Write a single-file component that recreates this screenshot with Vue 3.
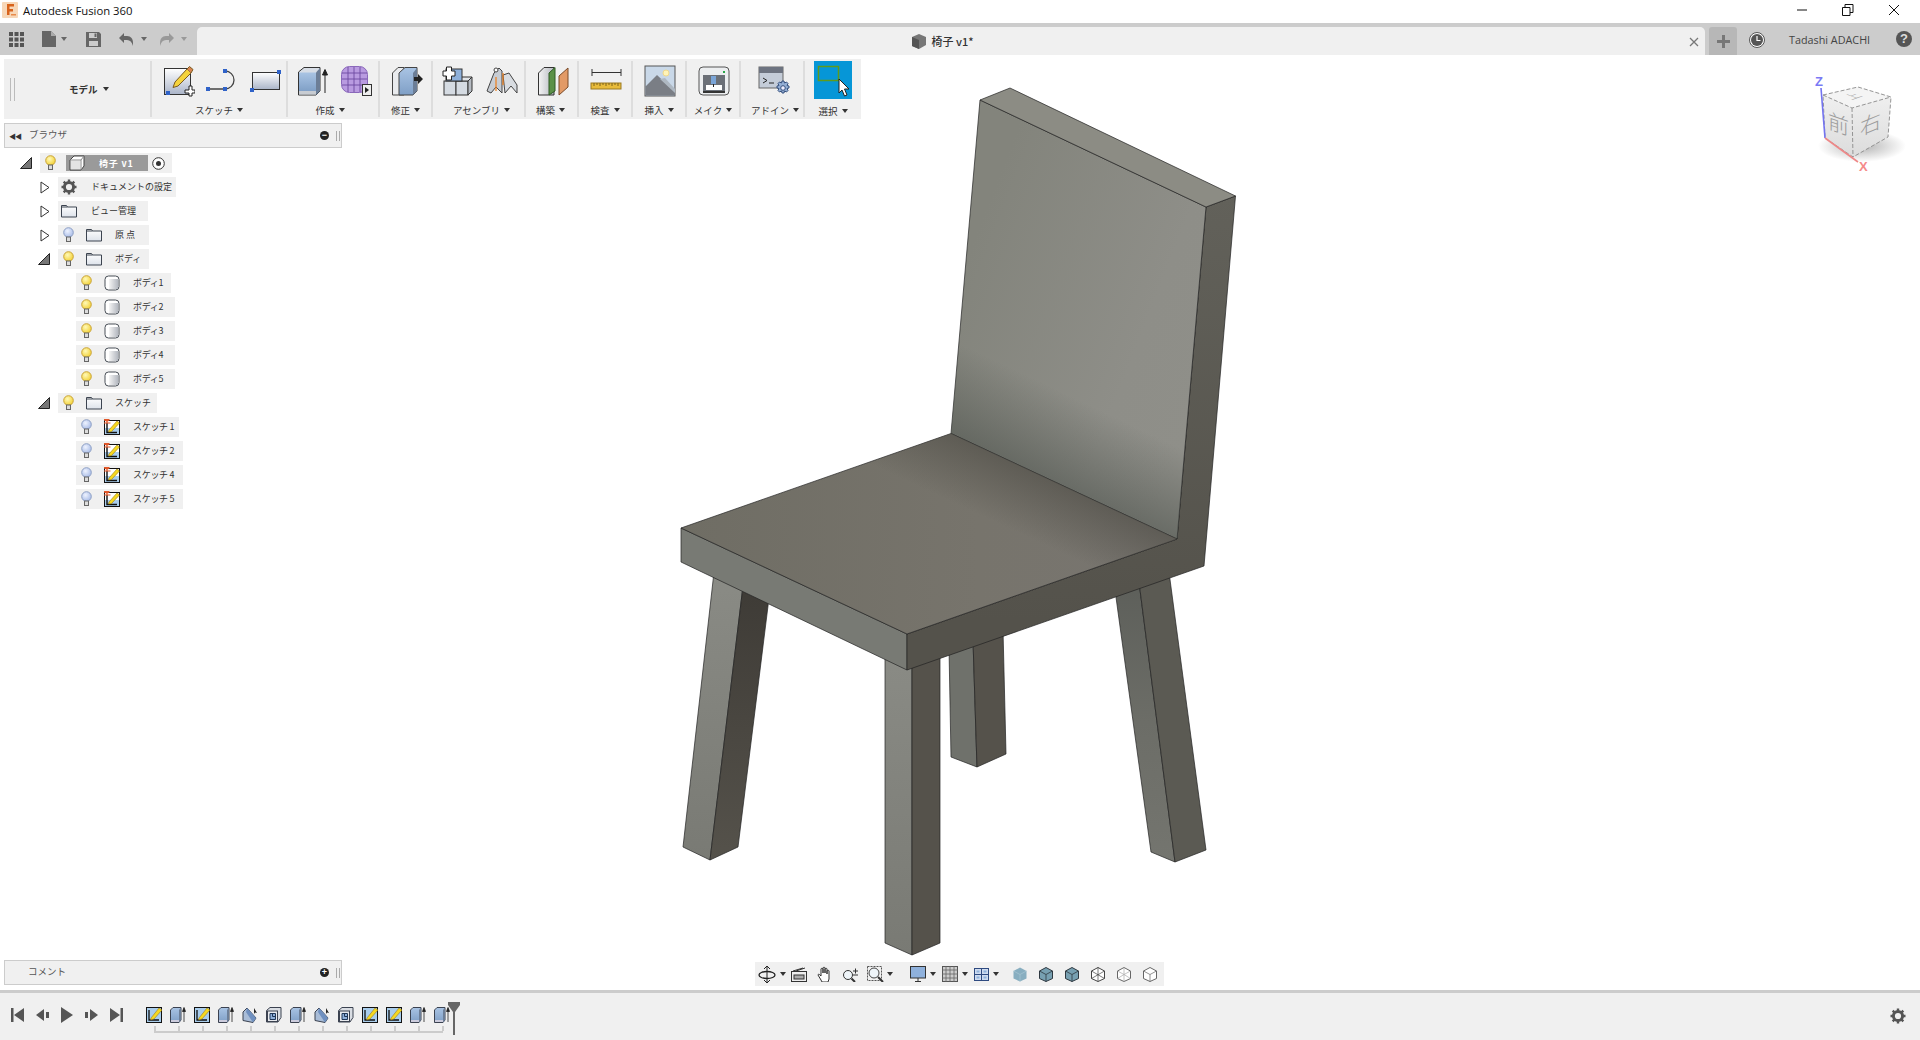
<script setup>
const groups = [
  { label: 'スケッチ', w: 136, gap: 10, pad: 7, icons: [['sk-new', 32, 32], ['sk-arc', 34, 32], ['sk-rect', 33, 32]] },
  { label: '作成', w: 92, gap: 11, pad: 4, lx: -6, icons: [['cr-box', 32, 32], ['cr-mesh', 33, 32]] },
  { label: '修正', w: 53, gap: 0, pad: 2, icons: [['md-press', 32, 32]] },
  { label: 'アセンブリ', w: 93, gap: 12, pad: 2, lx: 6, icons: [['as-new', 32, 32], ['as-joint', 32, 32]] },
  { label: '構築', w: 53, gap: 0, pad: 2, lx: -2, icons: [['cn-plane', 32, 32]] },
  { label: '検査', w: 54, gap: 0, pad: 2, icons: [['in-measure', 32, 32]] },
  { label: '挿入', w: 54, gap: 0, pad: 2, icons: [['ins-pic', 32, 32]] },
  { label: 'メイク', w: 54, gap: 0, pad: 2, icons: [['mk-print', 32, 32]] },
  { label: 'アドイン', w: 64, gap: 0, pad: 4, lx: 6, icons: [['ad-script', 32, 32]] }
]

const tree = [
  { depth: 1, exp: 'closed', icon: 'gear', label: 'ドキュメントの設定', w: 118 },
  { depth: 1, exp: 'closed', icon: 'folder', label: 'ビュー管理', w: 90 },
  { depth: 1, exp: 'closed', bulb: 'off', icon: 'folder', label: '原点', w: 91, wide: true },
  { depth: 1, exp: 'open', bulb: 'on', icon: 'folder', label: 'ボディ', w: 91 },
  { depth: 2, bulb: 'on', icon: 'body', label: 'ボディ1', w: 95 },
  { depth: 2, bulb: 'on', icon: 'body', label: 'ボディ2', w: 99 },
  { depth: 2, bulb: 'on', icon: 'body', label: 'ボディ3', w: 99 },
  { depth: 2, bulb: 'on', icon: 'body', label: 'ボディ4', w: 99 },
  { depth: 2, bulb: 'on', icon: 'body', label: 'ボディ5', w: 99 },
  { depth: 1, exp: 'open', bulb: 'on', icon: 'folder', label: 'スケッチ', w: 99 },
  { depth: 2, bulb: 'off', icon: 'sketch', label: 'スケッチ 1', w: 103 },
  { depth: 2, bulb: 'off', icon: 'sketch', label: 'スケッチ 2', w: 107 },
  { depth: 2, bulb: 'off', icon: 'sketch', label: 'スケッチ 4', w: 107 },
  { depth: 2, bulb: 'off', icon: 'sketch', label: 'スケッチ 5', w: 107 }
]

const timeline = ['tl-sketch', 'tl-extrude', 'tl-sketch', 'tl-extrude', 'tl-chamfer', 'tl-shell', 'tl-extrude', 'tl-chamfer', 'tl-shell', 'tl-sketch', 'tl-sketch', 'tl-extrude', 'tl-extrude']

const ticks = timeline.map((_, i) => i)
</script>

<template>
  <div class="app">
    <!-- shared icons -->
    <svg class="defs" width="0" height="0">
      <defs>
        <linearGradient id="g-paper" x1="0" y1="0" x2="0" y2="1"><stop offset="0" stop-color="#fff" /><stop offset="1" stop-color="#aab4c8" /></linearGradient>
        <linearGradient id="g-folder" x1="0" y1="0" x2="0" y2="1"><stop offset="0" stop-color="#fff" /><stop offset="1" stop-color="#dde2ea" /></linearGradient>
        <linearGradient id="g-blue" x1="0" y1="0" x2="0" y2="1"><stop offset="0" stop-color="#a9c4e4" /><stop offset="1" stop-color="#7f9fc6" /></linearGradient>
        <linearGradient id="g-gray" x1="0" y1="0" x2="1" y2="0"><stop offset="0" stop-color="#f4f4f4" /><stop offset="1" stop-color="#b4b8c0" /></linearGradient>
        <radialGradient id="g-on" cx="0.4" cy="0.35" r="0.7"><stop offset="0" stop-color="#fff9b8" /><stop offset="1" stop-color="#f2cf2e" /></radialGradient>
        <radialGradient id="g-off" cx="0.4" cy="0.35" r="0.7"><stop offset="0" stop-color="#eef3ff" /><stop offset="1" stop-color="#a5b9e6" /></radialGradient>

        <linearGradient id="g-back" gradientUnits="userSpaceOnUse" x1="950" y1="300" x2="1205" y2="400"><stop offset="0" stop-color="#83847c" /><stop offset="0.7" stop-color="#8e8e88" /><stop offset="1" stop-color="#8f8f89" /></linearGradient>
        <linearGradient id="g-back-shade" gradientUnits="userSpaceOnUse" x1="1064" y1="486" x2="1100" y2="410"><stop offset="0" stop-color="#50554f" stop-opacity="0.6" /><stop offset="1" stop-color="#50554f" stop-opacity="0" /></linearGradient>
        <linearGradient id="g-seat" gradientUnits="userSpaceOnUse" x1="681" y1="528" x2="1177" y2="539"><stop offset="0" stop-color="#6f6d64" /><stop offset="0.6" stop-color="#77746c" /><stop offset="1" stop-color="#787570" /></linearGradient>
        <linearGradient id="g-seat-shade" gradientUnits="userSpaceOnUse" x1="1064" y1="486" x2="1038" y2="542"><stop offset="0" stop-color="#4e4c45" stop-opacity="0.6" /><stop offset="1" stop-color="#4e4c45" stop-opacity="0" /></linearGradient>
        <linearGradient id="g-side" gradientUnits="userSpaceOnUse" x1="1200" y1="196" x2="1200" y2="620"><stop offset="0" stop-color="#62615a" /><stop offset="1" stop-color="#54524b" /></linearGradient>
        <linearGradient id="g-leg-l" x1="0" y1="0" x2="0" y2="1"><stop offset="0" stop-color="#8a8b85" /><stop offset="1" stop-color="#797a74" /></linearGradient>
        <linearGradient id="g-leg-r" x1="0" y1="0" x2="0" y2="1"><stop offset="0" stop-color="#3e3b36" /><stop offset="1" stop-color="#55524b" /></linearGradient>
        <linearGradient id="g-leg-far" x1="0" y1="0" x2="0" y2="1"><stop offset="0" stop-color="#5d5f5a" /><stop offset="0.5" stop-color="#6c6d67" /><stop offset="1" stop-color="#74756f" /></linearGradient>
        <radialGradient id="g-shadow" cx="0.5" cy="0.5" r="0.5"><stop offset="0" stop-color="#999" stop-opacity="0.75" /><stop offset="1" stop-color="#999" stop-opacity="0" /></radialGradient>
        <linearGradient id="g-cube" x1="0" y1="0" x2="0" y2="1"><stop offset="0" stop-color="#f2f2f2" /><stop offset="1" stop-color="#dcdcdc" /></linearGradient>

        <symbol id="bulb-on" viewBox="0 0 11 16"><circle cx="5.5" cy="5.5" r="4.8" fill="url(#g-on)" stroke="#c9a33a" /><rect x="3.5" y="10" width="4" height="4.5" fill="#ddd" stroke="#666" /></symbol>
        <symbol id="bulb-off" viewBox="0 0 11 16"><circle cx="5.5" cy="5.5" r="4.8" fill="url(#g-off)" stroke="#8ea0c4" /><rect x="3.5" y="10" width="4" height="4.5" fill="#ddd" stroke="#666" /></symbol>
        <symbol id="folder" viewBox="0 0 16 16"><path d="M.5 2.500h5l1 1.500h9v10H.5z M.5 4h6" fill="url(#g-folder)" stroke="#3c4450" /></symbol>
        <symbol id="body" viewBox="0 0 16 16"><rect x="1" y="1" width="14" height="14" rx="3.5" fill="#fff" stroke="#4a5058" /><rect x="5" y="4" width="9" height="10" fill="url(#g-gray)" /></symbol>
        <symbol id="cube" viewBox="0 0 16 16"><path d="M1 5 5 1h10v10l-3 4H1z" fill="#fff" stroke="#444" /><path d="M1 5h11v10M12 5l3-4" fill="none" stroke="#888" /><rect x="2" y="6" width="9" height="8" fill="#e4e4e4" /></symbol>
        <symbol id="sketch" viewBox="0 0 16 16"><rect x="0.5" y="1.5" width="15" height="14" fill="#a9cdec" stroke="#111" /><rect x="1" y="2" width="14" height="7" fill="#fff" /><path d="M3 4v9.500h10" fill="none" stroke="#111" stroke-width="1.400" /><path d="M5 11 13 2l2.500 2-8 8.500-3 .5z" fill="#f6d820" stroke="#9a7a10" stroke-width=".6" /><path d="M0 0h5.500v1.400L3.600 2.500v1H6.500v1H0v-1h2.400v-1L0 1.400z" fill="#e2582a" /></symbol>
        <symbol id="gear" viewBox="0 0 16 16"><circle cx="8" cy="8" r="4.6" fill="none" stroke="#555" stroke-width="3" /><path d="M8 .5v3M8 12.500v3M.5 8h3M12.500 8h3M2.700 2.700l2.100 2.100M11.200 11.200l2.100 2.100M13.300 2.700l-2.100 2.100M4.800 11.200l-2.100 2.100" stroke="#555" stroke-width="2.400" /></symbol>
        <symbol id="exp-open" viewBox="0 0 12 12"><path d="M.5 11.500 11.500.5v11z" fill="#777" stroke="#222" /></symbol>
        <symbol id="exp-closed" viewBox="0 0 10 13"><path d="M1 1l8 5.500-8 5.500z" fill="#fff" stroke="#333" /></symbol>

        <symbol id="sk-new" viewBox="0 0 32 32"><rect x="1.500" y="3.500" width="26" height="26" fill="url(#g-paper)" stroke="#333" /><rect x="3" y="26" width="4" height="4" fill="#2f62c8" /><path d="M12 17 24 4l4 4-13 13-5 1.500z" fill="#f5d33c" stroke="#7a5a20" /><path d="M24 4l2.500-2.500 3.500 3L28 8" fill="#d88450" stroke="#7a5a20" /><path d="M22 25h4v-4h3v4h3v3h-3v3h-3v-3h-4z" fill="#fff" stroke="#222" /></symbol>
        <symbol id="sk-arc" viewBox="0 0 34 32"><path d="M3 24H20M20 6A9 9 0 0 1 20 24" fill="none" stroke="#444" stroke-width="1.300" /><rect x="1" y="22" width="4" height="4" fill="#2f62c8" /><rect x="18" y="22" width="4" height="4" fill="#2f62c8" /><rect x="18" y="4" width="4" height="4" fill="#2f62c8" /></symbol>
        <symbol id="sk-rect" viewBox="0 0 33 32"><rect x="3.500" y="7.500" width="27" height="17" fill="url(#g-paper)" stroke="#333" /><rect x="28" y="5" width="4" height="4" fill="#2f62c8" /><rect x="1" y="23" width="4" height="4" fill="#2f62c8" /></symbol>
        <symbol id="cr-box" viewBox="0 0 32 32"><path d="M1.500 7 7 2.500h16V26l-4 4H1.500z" fill="#d7dde6" stroke="#333" /><rect x="2" y="7.500" width="17" height="19" fill="url(#g-blue)" /><rect x="2" y="26" width="17" height="3.500" fill="#c8ccd2" /><path d="M19 7.500 23 3v23l-4 4z" fill="#6c7e97" /><path d="M28 28V6M25.500 10 28 4.500l2.500 5.500z" fill="#222" stroke="#222" /></symbol>
        <symbol id="cr-mesh" viewBox="0 0 33 32"><rect x="1.500" y="1.500" width="26" height="26" rx="8" fill="#b99be0" stroke="#8a68ba" /><path d="M2 8h25M2 14h25M2 20h25M8 2v25M14 2v25M20 2v25" stroke="#6e4ba0" fill="none" stroke-width=".9" /><rect x="22.500" y="19.500" width="9" height="11" fill="#eee" stroke="#333" /><path d="M25 22v6l4-3z" fill="#222" /></symbol>
        <symbol id="md-press" viewBox="0 0 32 32"><path d="M1.500 8 7 2.500h6V30H1.500z" fill="#e9ebee" stroke="#444" /><path d="M8 8l6-5.500h12V26l-4 4H8z" fill="url(#g-blue)" stroke="#444" /><path d="M22 8 26 3v23l-4 4z" fill="#6c7e97" /><path d="M23 12h4v-3l5 5-5 5v-3h-4z" fill="#222" /></symbol>
        <symbol id="as-new" viewBox="0 0 32 32"><rect x="2" y="16" width="12" height="14" fill="#d5dbe2" stroke="#333" /><rect x="14" y="16" width="12" height="14" fill="#d5dbe2" stroke="#333" /><path d="M26 16l4-4v14l-4 4z" fill="#b6bbc2" stroke="#333" /><path d="M14 16l4-4h12l-4 4z" fill="#e2e5e9" stroke="#333" /><rect x="4" y="4" width="16" height="12" fill="#8eb0da" stroke="#333" /><path d="M1 6h3.500V2h5v4H13v5H9.500v4h-5v-4H1z" fill="#fff" stroke="#222" /></symbol>
        <symbol id="as-joint" viewBox="0 0 32 32"><path d="M1 26 8 8l5-5 3 3v22l-6-6-5 6z" fill="#c7ccd3" stroke="#444" /><path d="M17 10l6-2 8 12v8l-6-7-6 7z" fill="#d8dce1" stroke="#444" /><path d="M10 12v14M17 8v12" stroke="#ef7e1a" fill="none" stroke-width="1.200" /><circle cx="10" cy="5" r="2" fill="#fff" stroke="#444" /></symbol>
        <symbol id="cn-plane" viewBox="0 0 32 32"><path d="M1.500 8 7 2.500h10V30H1.500z" fill="url(#g-gray)" stroke="#333" /><path d="M12 8l6-5.500V26l-6 4z" fill="#5b9148" stroke="#2e5a24" /><path d="M22 11l9-8v19l-9 8z" fill="#e29a66" stroke="#7a4a28" /></symbol>
        <symbol id="in-measure" viewBox="0 0 32 32"><path d="M2 7.500h29M2 4v7M31 4v7" stroke="#333" fill="none" /><rect x="1" y="18" width="30" height="6" fill="#e8bb3a" stroke="#9b7b22" /><path d="M4 18v3M7 18v2M10 18v3M13 18v2M16 18v3M19 18v2M22 18v3M25 18v2M28 18v3" stroke="#7c6218" fill="none" /></symbol>
        <symbol id="ins-pic" viewBox="0 0 32 32"><rect x="1" y="1" width="30" height="30" fill="#c9d8e8" stroke="#555" /><circle cx="22" cy="8" r="3" fill="#fff4b8" stroke="#f0d88a" /><path d="M1.500 30.500v-9L13 10l18 17v3.500z" fill="#7a7e85" /><path d="M16 14l5-1 10 11v4z" fill="#aeb8c2" /></symbol>
        <symbol id="mk-print" viewBox="0 0 32 32"><rect x="1" y="2" width="30" height="28" rx="4" fill="#eceef0" stroke="#555" /><path d="M5 10h22v16H5z" fill="#6b7078" /><rect x="8" y="20" width="16" height="5" fill="#fff" /><rect x="13" y="11" width="5" height="8" fill="#7aa5d8" /><path d="M15.500 19v3" stroke="#222" /><rect x="25" y="6" width="2" height="2" fill="#2aa84a" /><path d="M5 27h22" stroke="#333" stroke-width="2" /></symbol>
        <symbol id="ad-script" viewBox="0 0 32 32"><rect x="1" y="2" width="24" height="21" fill="#c4ccd8" stroke="#666" /><rect x="1" y="2" width="24" height="6" fill="#6d7380" /><path d="M5 13l4 2.500-4 2.500M11 18h5" stroke="#222" fill="none" /><path d="M24 16l2 0 .5 2 2-1 1.500 1.500-1 2 2 .5v2l-2 .5 1 2-1.500 1.500-2-1-.5 2h-2l-.5-2-2 1-1.500-1.500 1-2-2-.5v-2l2-.5-1-2 1.500-1.500 2 1z" fill="#93aed4" stroke="#37517e" /><circle cx="25" cy="23" r="2.300" fill="#eef" stroke="#37517e" /></symbol>

        <symbol id="tl-sketch" viewBox="0 0 16 16"><rect x="0.500" y="0.500" width="15" height="15" fill="#a9cdec" stroke="#111" /><path d="M3 3v10h10" fill="none" stroke="#111" stroke-width="1.300" /><path d="M5 11 13 1l3 2-8 9-3.500 1z" fill="#f6d820" stroke="#8a6c14" stroke-width=".5" /></symbol>
        <symbol id="tl-extrude" viewBox="0 0 16 16"><path d="M.5 3 3 .5h8V13l-2 2.500H.5z" fill="url(#g-blue)" stroke="#3b4250" /><path d="M9 3l2-2.500V13l-2 2.500z" fill="#6c7e97" /><rect x="1" y="13" width="8" height="2" fill="#ccd" /><path d="M14 15V2M12.500 4.500 14 .5l1.500 4z" fill="#222" stroke="#222" stroke-width=".8" /></symbol>
        <symbol id="tl-chamfer" viewBox="0 0 16 16"><path d="M1 5 5 1l9 10-3 4.500-10-2z" fill="#a9bdd8" stroke="#3b4250" /><path d="M5 1l2 2 7 8-3 4.500L4 5z" fill="#6f90c0" /><path d="M12 1l3 5-2-.5-1 1.500z" fill="#222" /></symbol>
        <symbol id="tl-shell" viewBox="0 0 16 16"><path d="M.5 3.500 4 .5h11v10l-3 4.500H.5z" fill="#d9dde3" stroke="#3b4250" /><rect x="1.500" y="4" width="10" height="10.500" fill="#e8eaee" stroke="#3b4250" /><path d="M4 6.500h5.500v6H4z" fill="#8eb0da" stroke="#1f3657" /><path d="M6.500 6.500v3H9.500" fill="none" stroke="#1f3657" /></symbol>

        <symbol id="nc-solid" viewBox="0 0 14 15"><path d="M7 .5 13.500 4v7.500L7 14.500.5 11.500V4z" fill="#88aec0" /><path d="M7 7.500v7M.5 4 7 7.500 13.500 4" fill="none" stroke="#a7c6d3" stroke-width=".7" /></symbol>
        <symbol id="nc-edge" viewBox="0 0 14 15"><path d="M7 .5 13.500 4v7.500L7 14.500.5 11.500V4z" fill="#77a0b2" stroke="#2e3840" /><path d="M7 7.500v7M.5 4 7 7.500 13.500 4" fill="none" stroke="#2e3840" stroke-width=".8" /></symbol>
        <symbol id="nc-wire" viewBox="0 0 14 15"><path d="M7 .5 13.500 4v7.500L7 14.500.5 11.500V4z" fill="#fff" stroke="#444" /><path d="M7 .5v14M.5 4l13 7.500M13.500 4 .5 11.500" fill="none" stroke="#444" stroke-width=".7" /></symbol>
        <symbol id="nc-wire2" viewBox="0 0 14 15"><path d="M7 .5 13.500 4v7.500L7 14.500.5 11.500V4z" fill="#fff" stroke="#666" /><path d="M7 7.500v7M.5 4 7 7.500 13.500 4M7 7.500V.5M.5 11.500 7 7.500 13.500 11.500" fill="none" stroke="#aaa" stroke-width=".7" /></symbol>
        <symbol id="nc-plain" viewBox="0 0 14 15"><path d="M7 .5 13.500 4v7.500L7 14.500.5 11.500V4z" fill="#fff" stroke="#666" /><path d="M7 7.500v7M.5 4 7 7.500 13.500 4" fill="none" stroke="#666" stroke-width=".7" /></symbol>
      </defs>
    </svg>

    <header class="titlebar">
      <svg class="logo" width="16" height="16" viewBox="0 0 16 16"><rect width="16" height="16" rx="1" fill="#f7d7b8" /><path d="M5 2h7v2.500H7.500V7H11v2.500H7.500V13H5z" fill="#d8631c" /><rect x="9" y="12" width="5" height="1.500" fill="#e88a4a" /></svg>
      <span class="app-name">Autodesk Fusion 360</span>
      <div class="win-ctrls">
        <svg width="12" height="12" viewBox="0 0 12 12"><path d="M1 6h10" stroke="#111" /></svg>
        <svg width="12" height="12" viewBox="0 0 12 12"><path d="M.5 3.500h7.500v8H.5z M3 3.500V.5h8v8H8" fill="none" stroke="#111" /></svg>
        <svg width="12" height="12" viewBox="0 0 12 12"><path d="M1 1l10 10M11 1 1 11" stroke="#111" /></svg>
      </div>
    </header>

    <div class="tabbar">
      <div class="qat">
        <svg width="15" height="15" viewBox="0 0 15 15" fill="#555"><path d="M0 0h4v4H0zM5.500 0h4v4h-4zM11 0h4v4h-4zM0 5.500h4v4H0zM5.500 5.500h4v4h-4zM11 5.500h4v4h-4zM0 11h4v4H0zM5.500 11h4v4h-4zM11 11h4v4h-4z" /></svg>
        <svg class="q-file" width="14" height="16" viewBox="0 0 14 16"><path d="M0 0h9l5 5v11H0z" fill="#666" /><path d="M9 0v5h5z" fill="#aaa" /></svg>
        <i class="caret q-caret"></i>
        <svg class="q-save" width="15" height="15" viewBox="0 0 15 15"><path d="M0 0h13l2 2v13H0z" fill="#666" /><path d="M3 1h8v5H3zM3 9h9v5H3z" fill="#ccc" /><path d="M8.500 1.500h2v3.500h-2z" fill="#666" /></svg>
        <svg class="q-undo" width="14" height="13" viewBox="0 0 14 13"><path d="M5 0v3h3c4 0 6 3 6 7v3c-1-4-3-6-6-6H5v3L0 5z" fill="#666" /></svg>
        <i class="caret q-caret c-undo"></i>
        <svg class="q-redo" width="14" height="13" viewBox="0 0 14 13"><path d="M9 0v3H6C2 3 0 6 0 10v3c1-4 3-6 6-6h3v3l5-5z" fill="#999" /></svg>
        <i class="caret q-caret dim"></i>
      </div>
      <div class="doc-tab">
        <div class="doc-title">
          <svg width="15" height="15" viewBox="0 0 15 15"><path d="M1 3 8 0l7 3v8l-7 4-7-3z" fill="#777" /><path d="M8 6v9L1 12V3z" fill="#555" /></svg>
          <span>椅子 v1*</span>
        </div>
        <svg class="tab-x" width="10" height="10" viewBox="0 0 10 10"><path d="M1 1l8 8M9 1 1 9" stroke="#777" stroke-width="1.300" /></svg>
      </div>
      <div class="plus-btn"><svg width="13" height="13" viewBox="0 0 13 13"><path d="M5 0h3v5h5v3H8v5H5V8H0V5h5z" fill="#777" /></svg></div>
      <svg class="clock" width="16" height="16" viewBox="0 0 16 16"><circle cx="8" cy="8" r="7.500" fill="#fff" stroke="#555" /><circle cx="8" cy="8" r="6" fill="#555" /><path d="M8 4v4.500h3.500" fill="none" stroke="#fff" stroke-width="1.200" /></svg>
      <span class="user">Tadashi ADACHI</span>
      <div class="help">?</div>
    </div>

    <main class="viewport">
      <svg class="scene" viewBox="0 55 1920 935" width="1920" height="935">
        <!-- back leg -->
        <path d="M949 648 973 640 977 767 951 757z" fill="#6f716b" stroke="#222" stroke-width=".7" />
        <path d="M973 640 1003 630 1006 754 977 767z" fill="#55524b" stroke="#222" stroke-width=".7" />
        <!-- front left leg -->
        <path d="M714 572 743 586 710 860 683 847z" fill="url(#g-leg-l)" stroke="#222" stroke-width=".7" />
        <path d="M743 586 769 598 738 847 710 860z" fill="url(#g-leg-r)" stroke="#222" stroke-width=".7" />
        <!-- right leg -->
        <path d="M1115 590 1139 582 1175 862 1151 852z" fill="url(#g-leg-far)" stroke="#222" stroke-width=".7" />
        <path d="M1139 582 1169 572 1206 850 1175 862z" fill="#5b5a53" stroke="#222" stroke-width=".7" />
        <!-- centre leg -->
        <path d="M885 650 912 663 912 955 885 943z" fill="url(#g-leg-l)" stroke="#222" stroke-width=".7" />
        <path d="M912 663 940 652 940 943 912 955z" fill="#55524b" stroke="#222" stroke-width=".7" />
        <!-- seat side faces, the right one runs up into the backrest side -->
        <path d="M681 528 907 634 907 670 681 562z" fill="#787a74" stroke="#222" stroke-width=".7" />
        <path d="M907 634 1177 539 1206 207 1235.500 196 1204 566 907 670z" fill="url(#g-side)" stroke="#222" stroke-width=".7" />
        <!-- backrest -->
        <path d="M980 100 1206 207 1177 539 951 433.500z" fill="url(#g-back)" stroke="#222" stroke-width=".7" />
        <path d="M980 100 1206 207 1177 539 951 433.500z" fill="url(#g-back-shade)" />
        <path d="M980 100 1010 88 1235.500 196 1206 207z" fill="#8c8c84" stroke="#222" stroke-width=".7" />
        <!-- seat top -->
        <path d="M681 528 951 433.500 1177 539 907 634z" fill="url(#g-seat)" stroke="#222" stroke-width=".7" />
        <path d="M681 528 951 433.500 1177 539 907 634z" fill="url(#g-seat-shade)" />
      </svg>

      <section class="toolbar">
        <div class="tool-model">
          <span class="grip"></span>
          <span class="model-label">モデル</span>
          <i class="caret dark"></i>
        </div>
        <div v-for="g in groups" :key="g.label" class="tool-group" :style="{ width: g.w + 'px' }">
          <div class="tool-icons" :style="{ gap: g.gap + 'px', paddingLeft: g.pad + 'px' }">
            <svg v-for="ic in g.icons" :key="ic[0]" :width="ic[1]" :height="ic[2]"><use :href="'#' + ic[0]" /></svg>
          </div>
          <div class="tool-label" :style="{ paddingLeft: g.lx > 0 ? g.lx + 'px' : 0, paddingRight: g.lx < 0 ? -g.lx + 'px' : 0 }">{{ g.label }}<i class="caret dark"></i></div>
        </div>
        <div class="tool-group last">
          <div class="select-btn">
            <svg width="38" height="38" viewBox="0 0 38 38"><rect x="4.500" y="5.500" width="20" height="14" fill="none" stroke="#5f9a1c" stroke-width="1.500" /><path d="M25 18v14l3-3 2.500 6 2.500-1-2.500-6H35z" fill="#fff" stroke="#222" /></svg>
          </div>
          <div class="tool-label">選択<i class="caret dark"></i></div>
        </div>
      </section>

      <section class="panel browser">
        <span class="rewind">◀◀</span>
        <span class="panel-title">ブラウザ</span>
        <span class="round-btn">−</span>
        <span class="panel-grip"></span>
      </section>

      <section class="tree">
        <div class="row root">
          <svg class="exp-open" width="12" height="12"><use href="#exp-open" /></svg>
          <div class="chip" style="width: 132px">
            <svg class="bulb" width="11" height="16"><use href="#bulb-on" /></svg>
            <div class="root-name">
              <svg width="16" height="16"><use href="#cube" /></svg>
              <span>椅子 v1</span>
            </div>
            <svg class="target" width="13" height="13" viewBox="0 0 13 13"><circle cx="6.500" cy="6.500" r="5.800" fill="#fff" stroke="#333" /><circle cx="6.500" cy="6.500" r="2.500" fill="#333" /></svg>
          </div>
        </div>
        <div v-for="n in tree" :key="n.label" class="row" :style="{ paddingLeft: 20 + n.depth * 18 + 'px' }">
          <div class="exp-slot">
            <svg v-if="n.exp === 'open'" width="12" height="12"><use href="#exp-open" /></svg>
            <svg v-else-if="n.exp === 'closed'" class="exp-c" width="10" height="13"><use href="#exp-closed" /></svg>
          </div>
          <div class="chip" :style="{ width: n.w + 'px' }">
            <svg v-if="n.bulb" class="bulb" width="11" height="16"><use :href="'#bulb-' + n.bulb" /></svg>
            <svg class="node-icon" :class="{ solo: !n.bulb }" width="16" height="16"><use :href="'#' + n.icon" /></svg>
            <span class="node-label" :class="{ solo: !n.bulb, sub: n.depth === 2, wide: n.wide }">{{ n.label }}</span>
          </div>
        </div>
      </section>

      <div class="spacer"></div>

      <section class="panel comment">
        <span class="panel-title">コメント</span>
        <span class="round-btn">+</span>
        <span class="panel-grip"></span>
      </section>

      <nav class="navbar">
        <svg width="18" height="17" viewBox="0 0 18 17"><path d="M9 0v17M6 3l3-3 3 3M6 14l3 3 3-3" fill="none" stroke="#222" /><ellipse cx="9" cy="9" rx="8" ry="3.500" fill="none" stroke="#222" stroke-width="1.300" /></svg>
        <i class="caret dark nav-caret"></i>
        <svg class="n1" width="16" height="15" viewBox="0 0 16 15"><rect x=".5" y="4.500" width="15" height="10" fill="#eee" stroke="#333" /><rect x="3" y="8" width="10" height="4" fill="#aaa" stroke="#333" /><path d="M2 4 12 1M5 4l9-3" stroke="#333" /></svg>
        <svg class="n2" width="16" height="16" viewBox="0 0 16 16"><path d="M4 14 1 9c0-1 1-1 2 0l1 1V3c0-1 2-1 2 0v4-5c0-1 2-1 2 0v5-4c0-1 2-1 2 0v5-3c0-1 2-1 2 0v8l-1 3H5z" fill="#fff" stroke="#333" /></svg>
        <svg class="n3" width="17" height="15" viewBox="0 0 17 15"><circle cx="6" cy="8" r="4.500" fill="#eef4f8" stroke="#333" /><path d="M9.500 11.500 13 15" stroke="#333" stroke-width="2" /><path d="M11 4h5M13.500 1.500v5M11 8h5" stroke="#333" /></svg>
        <svg class="n4" width="17" height="16" viewBox="0 0 17 16"><rect x=".5" y=".5" width="14" height="14" fill="none" stroke="#555" stroke-dasharray="2 1" /><circle cx="7" cy="7" r="5" fill="#eef4f8" stroke="#444" /><path d="M11 11l5 5" stroke="#333" stroke-width="2" /></svg>
        <i class="caret dark nav-caret c2"></i>
        <svg class="n5" width="16" height="16" viewBox="0 0 16 16"><rect x=".5" y=".5" width="15" height="11.500" fill="#8fb1dc" stroke="#333" /><path d="M5 15.500h6M8 12v3" stroke="#333" /></svg>
        <i class="caret dark nav-caret"></i>
        <svg class="n6" width="16" height="16" viewBox="0 0 16 16"><rect x=".5" y=".5" width="15" height="15" fill="#ccc" stroke="#555" /><path d="M4 0v16M8 0v16M12 0v16M0 4h16M0 8h16M0 12h16" stroke="#666" stroke-width=".8" /></svg>
        <i class="caret dark nav-caret"></i>
        <svg class="n7" width="15" height="13" viewBox="0 0 15 13"><rect x=".5" y=".5" width="14" height="12" fill="#cfdcf0" stroke="#2e4a80" /><path d="M7.500 0v13M0 6.500h15" stroke="#2e4a80" /><path d="M2.500 2.500h3v2h-3zM9.500 2.500h3v2h-3zM2.500 8.500h3v2h-3zM9.500 8.500h3v2h-3z" fill="#8fb1dc" /></svg>
        <i class="caret dark nav-caret"></i>
        <svg class="n8" width="14" height="15"><use href="#nc-solid" /></svg>
        <svg class="n9" width="14" height="15"><use href="#nc-edge" /></svg>
        <svg class="n9" width="14" height="15"><use href="#nc-edge" /></svg>
        <svg class="n9" width="14" height="15"><use href="#nc-wire" /></svg>
        <svg class="n9" width="14" height="15"><use href="#nc-wire2" /></svg>
        <svg class="n9" width="14" height="15"><use href="#nc-plain" /></svg>
      </nav>

      <svg class="viewcube" width="110" height="110" viewBox="1810 72 110 110">
        <ellipse cx="1862" cy="146" rx="44" ry="16" fill="url(#g-shadow)" />
        <path d="M1823 95 1858 87 1891 97 1888 137 1853 157 1825 138z" fill="url(#g-cube)" />
        <path d="M1823 95 1858 87 1891 97 1852 108z" fill="#f4f4f4" />
        <path d="M1823 95 1858 87 1891 97 1888 137 1853 157 1825 138zM1823 95 1852 108 1891 97M1852 108 1853 157" fill="none" stroke="#8a8a8a" stroke-dasharray="4 2" stroke-width=".9" />
        <path d="M1821 88 1825 138" stroke="#7373f0" stroke-width="1.600" />
        <path d="M1825 138 1858 162" stroke="#e88" stroke-width="1.600" />
        <text x="1815" y="86" class="axis-z">Z</text>
        <text x="1859" y="171" class="axis-x">X</text>
        <text transform="matrix(1 .35 0 1 1828 128)" class="cube-text">前</text>
        <text transform="matrix(1 -.42 0 1 1860 136)" class="cube-text">右</text>
        <text transform="matrix(.8 -.28 .8 .3 1851 100)" class="cube-text small">上</text>
      </svg>
    </main>

    <footer class="timeline">
      <div class="media">
        <svg width="13" height="14" viewBox="0 0 13 14"><path d="M0 0h2.500v14H0zM13 0v14L3 7z" fill="#555" /></svg>
        <svg width="13" height="12" viewBox="0 0 13 12"><path d="M8 0v12L0 6zM10 3h3v6h-3z" fill="#555" /></svg>
        <svg width="12" height="16" viewBox="0 0 12 16"><path d="M0 0l12 8-12 8z" fill="#555" /></svg>
        <svg width="13" height="12" viewBox="0 0 13 12"><path d="M5 0v12l8-6zM0 3h3v6H0z" fill="#555" /></svg>
        <svg width="13" height="14" viewBox="0 0 13 14"><path d="M0 0l10 7-10 7zM10.500 0H13v14h-2.500z" fill="#555" /></svg>
      </div>
      <div class="steps">
        <div class="step-icons">
          <svg v-for="(t, i) in timeline" :key="i" width="16" height="16"><use :href="'#' + t" /></svg>
        </div>
        <div class="ruler">
          <i v-for="i in ticks" :key="i"></i>
        </div>
        <svg class="marker" width="12" height="33" viewBox="0 0 12 33"><path d="M0 0h12v3L7 10v23H5V10L0 3z" fill="#666" /></svg>
      </div>
      <svg class="tl-gear" width="16" height="16"><use href="#gear" /></svg>
    </footer>
  </div>
</template>

<style>
html, body { margin: 0; height: 100%; background: #fff; overflow: hidden; }
</style>

<style scoped>
.app {
  width: 1920px;
  height: 1040px;
  display: flex;
  flex-direction: column;
  background: #fff;
  font-family: "Noto Sans CJK JP", "Noto Sans", sans-serif;
  color: #333;
  overflow: hidden;
}
.defs { position: absolute; }
svg { display: block; flex: none; }
.caret {
  display: inline-block;
  width: 0;
  height: 0;
  border-left: 3px solid transparent;
  border-right: 3px solid transparent;
  border-top: 4px solid #666;
}
.caret.dark { border-top-color: #333; }

.titlebar { height: 23px; display: flex; align-items: center; padding: 0 20px 3px 2px; box-sizing: border-box; flex: none; }
.logo { margin-right: 5px; }
.app-name { font: 11.300px "Open Sans", sans-serif; color: #111; }
.win-ctrls { margin-left: auto; display: flex; gap: 34px; }

.tabbar { height: 32px; flex: none; background: #ccc; display: flex; align-items: flex-end; }
.qat { width: 197px; height: 32px; display: flex; align-items: center; padding-left: 9px; box-sizing: border-box; }
.q-file { margin-left: 18px; }
.q-caret { margin-left: 5px; border-left-width: 3.5px; border-right-width: 3.5px; }
.q-caret.dim { border-top-color: #999; margin-left: 7px; }
.q-save { margin-left: 19px; }
.q-undo { margin-left: 18px; }
.c-undo { margin-left: 8px; }
.q-redo { margin-left: 13px; }
.doc-tab { width: 1508px; height: 28px; background: #f0f0f0; border-radius: 5px 5px 0 0; display: flex; align-items: center; justify-content: center; position: relative; }
.doc-title { display: flex; align-items: center; gap: 5px; font-size: 11px; font-weight: 500; color: #333; margin-left: -17px; }
.tab-x { position: absolute; right: 6px; top: 10px; }
.plus-btn { width: 28px; height: 28px; margin-left: 4px; background: #b7b7b7; border-radius: 3px 3px 0 0; display: flex; align-items: center; justify-content: center; }
.clock { margin: 0 0 7px 12px; }
.user { font: 10.800px "Open Sans", sans-serif; color: #444; width: 100px; margin: 0 0 8px 24px; }
.help { width: 16px; height: 16px; margin: 0 0 8px 7px; border-radius: 50%; background: #555; color: #ddd; font: bold 13px/16px "Liberation Sans", sans-serif; text-align: center; }

.viewport { position: relative; flex: 1; display: flex; flex-direction: column; min-height: 0; }
.scene { position: absolute; left: 0; top: 0; }

.toolbar { position: relative; margin: 4px 0 0 4px; height: 60px; display: flex; align-self: flex-start; background: #f0f0f0; flex: none; }
.tool-model { width: 148px; box-sizing: border-box; display: flex; align-items: center; border-right: 2px solid #ddd; margin: 2px 0; gap: 5px; }
.grip { width: 3px; height: 23px; margin: 0 49px 0 6px; border-left: 1px solid #bbb; border-right: 1px solid #bbb; }
.model-label { font-size: 9.500px; font-weight: 700; color: #333; }
.tool-group { box-sizing: border-box; display: flex; flex-direction: column; align-items: center; border-right: 2px solid #ddd; margin: 2px 0; }
.tool-group.last { border-right: 0; width: 56px; margin: 2px 0 0; }
.tool-icons { display: flex; height: 37px; padding-top: 4px; box-sizing: border-box; }
.tool-label { display: flex; align-items: center; gap: 4px; font-size: 9.500px; line-height: 14px; height: 15px; margin-top: 5px; color: #333; white-space: nowrap; }
.select-btn { width: 38px; height: 38px; background: #0696d7; margin-right: 1px; }
.tool-group.last .tool-label { margin-top: 4px; }

.panel { position: relative; margin-left: 4px; width: 338px; height: 25px; box-sizing: border-box; flex: none; background: #f0f0f0; border: 1px solid #ccc; display: flex; align-items: center; font-size: 9.500px; color: #555; }
.browser { margin-top: 4px; }
.comment { margin-bottom: 5px; }
.panel-title { position: relative; top: -2px; }
.rewind { font-size: 7px; letter-spacing: -1px; margin-left: 4px; width: 20px; color: #333; }
.comment .panel-title { margin-left: 23px; }
.round-btn { margin-left: auto; width: 9px; height: 9px; border-radius: 50%; background: #222; color: #fff; font: bold 9px/9px "Liberation Sans", sans-serif; text-align: center; }
.panel-grip { width: 2px; height: 10px; margin: 0 1px 0 7px; border-left: 1px solid #aaa; border-right: 1px solid #aaa; }

.tree { position: relative; padding-top: 5px; display: flex; flex-direction: column; gap: 4px; flex: none; }
.row { display: flex; align-items: center; height: 20px; }
.row.root { padding-left: 20px; }
.exp-open { margin-right: 8px; }
.exp-slot { width: 20px; display: flex; justify-content: flex-start; }
.exp-c { margin-left: 2px; }
.chip { height: 20px; background: #f0f0f0; display: flex; align-items: center; box-sizing: border-box; font-size: 9px; color: #333; white-space: nowrap; }
.bulb { margin-left: 5px; }
.node-icon { margin-left: 12px; }
.node-icon.solo { margin-left: 3px; }
.node-label { margin-left: 13px; position: relative; top: -1px; }
.node-label.solo { margin-left: 14px; }
.node-label.sub { letter-spacing: -.3px; }
.node-label.wide { letter-spacing: 2px; }
.root-name { margin-left: 10px; width: 82px; height: 16px; background: #9a9a9a; display: flex; align-items: center; padding-left: 3px; box-sizing: border-box; color: #fff; font-weight: 700; }
.root-name span { margin-left: 14px; letter-spacing: .8px; }
.target { margin-left: 4px; }

.spacer { flex: 1; }

.navbar { position: absolute; left: 755px; top: 907px; width: 409px; height: 24px; background: #f0f0f0; display: flex; align-items: center; padding-left: 3px; box-sizing: border-box; }
.nav-caret { margin-left: 4px; }
.c2 { margin-left: 3px; }
.n1 { margin-left: 5px; }
.n2 { margin-left: 10px; }
.n3 { margin-left: 9px; }
.n4 { margin-left: 8px; }
.n5 { margin-left: 17px; }
.n6 { margin-left: 5.500px; }
.n7 { margin-left: 6.500px; }
.n8 { margin-left: 13.500px; }
.n9 { margin-left: 12px; }

.viewcube { position: absolute; left: 1810px; top: 17px; }
.axis-z { font: bold 13px "Liberation Sans", sans-serif; fill: #7a7af5; }
.axis-x { font: bold 13px "Liberation Sans", sans-serif; fill: #f58a8a; }
.cube-text { font-size: 21px; fill: #9c9c9c; font-family: "Noto Sans CJK JP", sans-serif; font-weight: 300; }
.cube-text.small { font-size: 15px; }

.timeline { position: relative; height: 50px; flex: none; box-sizing: border-box; background: #f0f0f0; border-top: 3px solid #ccc; display: flex; align-items: flex-start; }
.media { display: flex; align-items: center; gap: 12px; height: 20px; margin: 12px 0 0 11px; }
.steps { position: relative; margin: 14px 0 0 23px; }
.step-icons { display: flex; gap: 8px; }
.ruler { display: flex; gap: 22px; height: 5px; margin: 3px 0 0 8px; border-bottom: 2px solid #ccc; width: 289px; }
.ruler i { width: 2px; height: 5px; background: #ccc; flex: none; }
.marker { position: absolute; left: 302px; top: -5px; }
.tl-gear { position: absolute; right: 14px; top: 15px; }
</style>
